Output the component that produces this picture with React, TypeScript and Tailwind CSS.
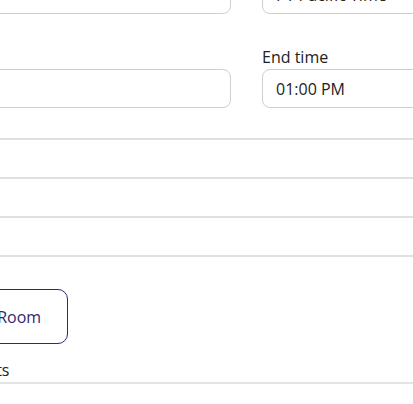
import { useState } from "react";

function Field({
  label,
  value,
  onChange,
}: {
  label?: string;
  value: string;
  onChange: (v: string) => void;
}) {
  return (
    <div className="flex flex-col">
      {label && <label className="h-6 leading-6 text-base">{label}</label>}
      <input
        value={value}
        onChange={(e) => onChange(e.target.value)}
        className="h-[39px] w-full rounded-lg border border-[#cfcfcf] bg-white px-[13px] text-base text-[#222] outline-none"
      />
    </div>
  );
}

export default function App() {
  const [timezone, setTimezone] = useState("PT Pacific Time");
  const [date, setDate] = useState("");
  const [endTime, setEndTime] = useState("01:00 PM");

  return (
    <div
      className="h-[404px] w-[413px] overflow-hidden bg-white text-[#222]"
      style={{ fontFamily: '"Open Sans", "Noto Sans", sans-serif' }}
    >
      <div className="-ml-[72px] -mt-[25px] w-[700px]">
        <div className="grid grid-cols-[303px_303px] gap-x-[31px]">
          <Field value="" onChange={() => {}} />
          <Field value={timezone} onChange={setTimezone} />
        </div>

        <div className="mt-[31px] grid grid-cols-[303px_303px] gap-x-[31px]">
          <Field label="Date" value={date} onChange={setDate} />
          <Field label="End time" value={endTime} onChange={setEndTime} />
        </div>

        <div className="mt-[30px] border-b-2 border-[#e0e0e0]">
          {[0, 1, 2].map((i) => (
            <div key={i} className="h-[39px] border-t-2 border-[#e0e0e0]" />
          ))}
        </div>

        <button
          type="button"
          className="mt-[32px] h-[55px] rounded-[10px] border border-[#2e2a6e] bg-white px-[26px] text-base text-[#2e2a6e]"
        >
          Book Room
        </button>

        <div className="mt-[14px] h-[26px] border-b-2 border-[#e4e4e4] leading-6 text-base">
          Comments
        </div>
      </div>
    </div>
  );
}
